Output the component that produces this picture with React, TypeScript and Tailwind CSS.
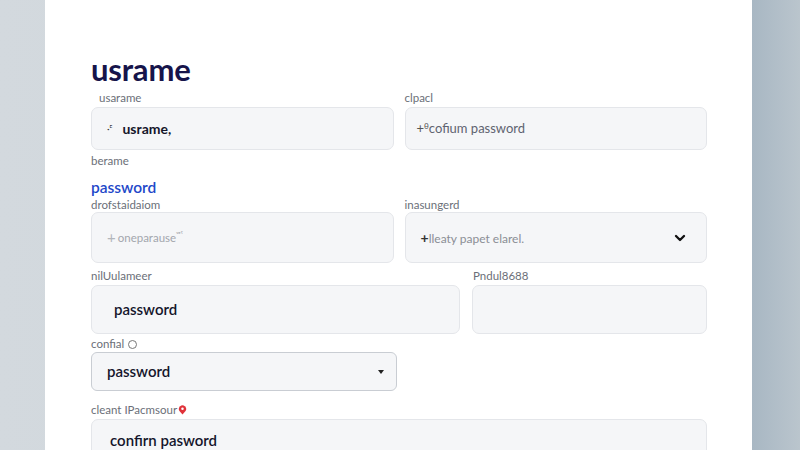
import { ChevronDown } from "lucide-react";

const font = { fontFamily: "Lato, 'Open Sans', sans-serif" };

function Label({ text, className = "" }: { text: string; className?: string }) {
  return (
    <div className={`h-[14px] text-[11.5px] leading-[14px] text-[#6b6f78] ${className}`}>{text}</div>
  );
}

export default function App() {
  return (
    <div
      className="flex w-full h-[450px] overflow-hidden bg-gradient-to-r from-[#d3d9de] to-[#c9d1d7]"
      style={font}
    >
      <div className="w-[45px] shrink-0" />
      <div className="w-[707px] shrink-0 bg-white pl-[46px] pr-[45px] pt-[52px]">
        <h1 className="h-[34px] text-[31px] leading-[34px] font-bold text-[#16144a] tracking-[-0.2px]">
          usrame
        </h1>

        <div className="mt-[5px] grid grid-cols-2 gap-x-[11px]">
          <div>
            <Label text="usarame" className="pl-[8px]" />
            <div className="mt-[2px] flex h-[43px] items-center rounded-[7px] border border-[#e4e6ea] bg-[#f5f6f8] pl-[15px]">
              <span className="text-[10px] text-[#333] mr-[10px]">·ᵍ</span>
              <span className="text-[14px] font-bold text-[#15162b]">usrame,</span>
            </div>
          </div>
          <div>
            <Label text="clpacl" />
            <div className="mt-[2px] flex h-[43px] items-center rounded-[7px] border border-[#e4e6ea] bg-[#f5f6f8] pl-[11px]">
              <span className="text-[13px] text-[#555]">+</span>
              <span className="text-[8px] text-[#555] -mt-[6px]">θ</span>
              <span className="text-[13px] text-[#5f6370]">cofium password</span>
            </div>
          </div>
        </div>

        <div className="mt-[4px] text-[11.5px] leading-[14px] text-[#6b6f78]">berame</div>
        <div className="mt-[10px] h-[18px] text-[15.5px] leading-[18px] font-semibold text-[#1e48c9]">
          password
        </div>

        <div className="mt-[2px] grid grid-cols-2 gap-x-[11px]">
          <div>
            <Label text="drofstaidaiom" />
            <div className="flex h-[51px] items-center rounded-[7px] border border-[#e4e6ea] bg-[#f5f6f8] pl-[15px]">
              <span className="text-[15px] text-[#b3b6bc] mr-[2px]">+</span>
              <span className="text-[11.5px] text-[#a3a6ad]">oneparause</span>
              <span className="text-[8px] text-[#a3a6ad] -mt-[5px]">ᵛᵉˤ</span>
            </div>
          </div>
          <div>
            <Label text="inasungerd" />
            <div className="flex h-[51px] items-center justify-between rounded-[7px] border border-[#e4e6ea] bg-[#f5f6f8] pl-[15px] pr-[18px]">
              <span className="text-[12px] text-[#8b8e95]">
                <span className="text-[14px] text-[#333] font-bold">+</span>lleaty papet elarel.
              </span>
              <ChevronDown size={16} strokeWidth={3.5} className="text-[#111]" />
            </div>
          </div>
        </div>

        <div className="mt-[6px] flex gap-x-[12px]">
          <div className="w-[369px]">
            <Label text="nilUulameer" />
            <div className="mt-[2px] flex h-[49px] items-center rounded-[7px] border border-[#e4e6ea] bg-[#f5f6f8] pl-[22px]">
              <span className="text-[15px] font-semibold text-[#14152b]">password</span>
            </div>
          </div>
          <div className="flex-1">
            <Label text="Pndul8688" className="pl-[1px]" />
            <div className="mt-[2px] h-[49px] rounded-[7px] border border-[#e4e6ea] bg-[#f5f6f8]" />
          </div>
        </div>

        <div className="mt-[3px] flex items-center gap-[4px] h-[14px] text-[11.5px] leading-[14px] text-[#6b6f78]">
          confial
          <span className="inline-block h-[9px] w-[9px] rounded-full border-[1.5px] border-[#777]" />
        </div>
        <div className="mt-[1px] flex h-[39px] w-[306px] items-center justify-between rounded-[6px] border border-[#c9cdd3] bg-[#f5f6f8] pl-[15px] pr-[12px]">
          <span className="text-[15px] font-semibold text-[#14152b]">password</span>
          <span className="block h-0 w-0 border-x-[3.5px] border-t-[4px] border-x-transparent border-t-[#222]" />
        </div>

        <div className="mt-[12px] flex items-center gap-[1px] h-[14px] text-[11.5px] leading-[14px] text-[#6b6f78]">
          cleant IPacmsour
          <svg width="9" height="10" viewBox="0 0 10 11">
            <path d="M5 10.5 L1.6 6.6 A4 4 0 1 1 8.4 6.6 Z" fill="#e0323a" />
            <circle cx="5" cy="4" r="1.4" fill="#fff" />
          </svg>
        </div>
        <div className="mt-[2px] flex h-[50px] items-start rounded-[7px] border border-[#e4e6ea] bg-[#f5f6f8] pl-[18px] pt-[13px]">
          <span className="text-[15px] leading-[15px] font-semibold text-[#14152b]">confirn pasword</span>
        </div>
      </div>
      <div className="flex-1 bg-gradient-to-r from-[#a8b7c3] to-[#bac5cd]" />
    </div>
  );
}
